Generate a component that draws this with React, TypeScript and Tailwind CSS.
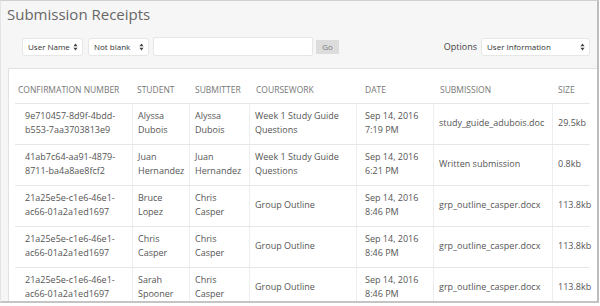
import React from "react";

type Row = {
  conf: string[];
  student: string[];
  submitter: string[];
  coursework: string[];
  date: string[];
  submission: string;
  size: string;
};

const rows: Row[] = [
  {
    conf: ["9e710457-8d9f-4bdd-", "b553-7aa3703813e9"],
    student: ["Alyssa", "Dubois"],
    submitter: ["Alyssa", "Dubois"],
    coursework: ["Week 1 Study Guide", "Questions"],
    date: ["Sep 14, 2016", "7:19 PM"],
    submission: "study_guide_adubois.doc",
    size: "29.5kb",
  },
  {
    conf: ["41ab7c64-aa91-4879-", "8711-ba4a8ae8fcf2"],
    student: ["Juan", "Hernandez"],
    submitter: ["Juan", "Hernandez"],
    coursework: ["Week 1 Study Guide", "Questions"],
    date: ["Sep 14, 2016", "6:21 PM"],
    submission: "Written submission",
    size: "0.8kb",
  },
  {
    conf: ["21a25e5e-c1e6-46e1-", "ac66-01a2a1ed1697"],
    student: ["Bruce", "Lopez"],
    submitter: ["Chris", "Casper"],
    coursework: ["Group Outline"],
    date: ["Sep 14, 2016", "8:46 PM"],
    submission: "grp_outline_casper.docx",
    size: "113.8kb",
  },
  {
    conf: ["21a25e5e-c1e6-46e1-", "ac66-01a2a1ed1697"],
    student: ["Chris", "Casper"],
    submitter: ["Chris", "Casper"],
    coursework: ["Group Outline"],
    date: ["Sep 14, 2016", "8:46 PM"],
    submission: "grp_outline_casper.docx",
    size: "113.8kb",
  },
  {
    conf: ["21a25e5e-c1e6-46e1-", "ac66-01a2a1ed1697"],
    student: ["Sarah", "Spooner"],
    submitter: ["Chris", "Casper"],
    coursework: ["Group Outline"],
    date: ["Sep 14, 2016", "8:46 PM"],
    submission: "grp_outline_casper.docx",
    size: "113.8kb",
  },
];

const cols = "grid grid-cols-[117px_57px_60px_107px_77px_119px_38px]";

function Arrows() {
  return (
    <svg width="5" height="8" viewBox="0 0 5 8" className="shrink-0">
      <path d="M2.5 0.5 L4.6 3.2 L0.4 3.2 Z" fill="#444" />
      <path d="M2.5 7.5 L4.6 4.8 L0.4 4.8 Z" fill="#444" />
    </svg>
  );
}

function Select({ label, className }: { label: string; className: string }) {
  return (
    <div
      className={`flex h-[18px] items-center justify-between rounded-[3px] border border-[#e6e6e6] bg-white pl-[5px] pr-[4px] text-[8px] text-[#333] ${className}`}
    >
      <span className="whitespace-nowrap">{label}</span>
      <Arrows />
    </div>
  );
}

function Lines({ lines }: { lines: string[] }) {
  return (
    <div>
      {lines.map((l, i) => (
        <div key={i} className="whitespace-nowrap">
          {l}
        </div>
      ))}
    </div>
  );
}

export default function App() {
  const cell = "flex items-center border-l border-[#eeeeee] pl-[5px] pb-[2px]";
  return (
    <div className="h-[306px] w-[600px] overflow-hidden bg-white font-['Open_Sans',sans-serif]">
      <div className="flex h-[303px] w-[599px] flex-col overflow-hidden border-t border-l border-r-2 border-b-2 border-t-[#d0d0d0] border-l-[#e4e4e4] border-r-[#bdbdbd] border-b-[#c4c4c4] bg-[#f6f6f6]">
        <h1 className="pl-[6px] pt-[3px] text-[15px] leading-[20px] text-[#666]">
          Submission Receipts
        </h1>

        <div className="mt-[13px] flex items-center pl-[21px] pr-[7px]">
          <Select label="User Name" className="w-[61px]" />
          <Select label="Not blank" className="ml-[5px] w-[61px]" />
          <div className="ml-[4px] h-[19px] w-[160px] rounded-[2px] border border-[#e6e6e6] bg-white" />
          <div className="ml-[3px] flex h-[14px] w-[23px] items-center justify-center bg-[#dcdcdc] text-[8px] text-[#777]">
            Go
          </div>
          <div className="ml-auto text-[9px] text-[#444]">Options</div>
          <Select label="User Information" className="ml-[4px] w-[109px]" />
        </div>

        <div className="ml-[7px] mt-[12px] flex-1 border-t border-l border-[#e2e2e2] bg-white pl-[6px]">
          <div className="w-[575px] text-[9px] text-[#555]">
            <div className={`${cols} h-[35px] border-b border-[#e6e6e6] pt-[15px] text-[8.5px] uppercase leading-[12px] text-[#777]`}>
              <div className="pl-[3px] whitespace-nowrap">Confirmation Number</div>
              <div className="pl-[5px]">Student</div>
              <div className="pl-[6px]">Submitter</div>
              <div className="pl-[7px]">Coursework</div>
              <div className="pl-[9px]">Date</div>
              <div className="pl-[7px]">Submission</div>
              <div className="pl-[6px]">Size</div>
            </div>
            {rows.map((r, i) => (
              <div key={i} className={`${cols} h-[41px] border-b border-[#e6e6e6] leading-[14px]`}>
                <div className="flex items-center pl-[10px] pb-[2px]">
                  <Lines lines={r.conf} />
                </div>
                <div className={cell}>
                  <Lines lines={r.student} />
                </div>
                <div className={cell}>
                  <Lines lines={r.submitter} />
                </div>
                <div className={`${cell} pl-[3px]`}>
                  <Lines lines={r.coursework} />
                </div>
                <div className={`${cell} pl-[8px]`}>
                  <Lines lines={r.date} />
                </div>
                <div className={cell}>
                  <span className="whitespace-nowrap">{r.submission}</span>
                </div>
                <div className={cell}>
                  <span className="whitespace-nowrap">{r.size}</span>
                </div>
              </div>
            ))}
          </div>
        </div>
      </div>
    </div>
  );
}
